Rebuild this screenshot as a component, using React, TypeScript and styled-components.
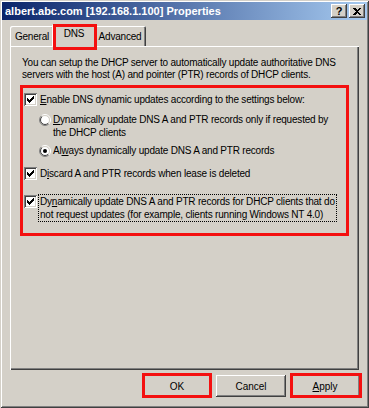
import React from "react";
import styled, { createGlobalStyle } from "styled-components";

const GlobalStyle = createGlobalStyle`
  html, body {
    margin: 0;
    padding: 0;
    background: #d4d0c8;
  }
  body {
    font-family: "Liberation Sans", Arial, sans-serif;
    font-size: 10px;
    letter-spacing: -0.2px;
    color: #000;
  }
`;

const RED = "#f41010";

// outer dialog frame
const Window = styled.div`
  width: 369px;
  height: 408px;
  box-sizing: border-box;
  background: #d4d0c8;
  padding: 2px 2px 3px;
  display: flex;
  flex-direction: column;
  box-shadow: inset 1px 1px 0 #d4d0c8, inset -1px -1px 0 #404040,
    inset 2px 2px 0 #fff, inset -2px -2px 0 #808080;
`;

const TitleBar = styled.div`
  height: 18px;
  display: flex;
  align-items: center;
  padding: 0 2px 0 3px;
  background: linear-gradient(to right, #0a246a, #a6caf0);
`;

const Title = styled.div`
  flex: 1;
  color: #fff;
  font-weight: bold;
  font-size: 11px;
  letter-spacing: 0;
  white-space: nowrap;
`;

const CaptionButton = styled.div<{ $gap?: number }>`
  width: 16px;
  height: 14px;
  margin-left: ${(p) => p.$gap ?? 0}px;
  background: #d4d0c8;
  display: flex;
  align-items: center;
  justify-content: center;
  font-weight: bold;
  font-size: 11px;
  line-height: 14px;
  box-shadow: inset -1px -1px 0 #404040, inset 1px 1px 0 #fff,
    inset -2px -2px 0 #808080, inset 2px 2px 0 #d4d0c8;
`;

const Body = styled.div`
  display: flex;
  flex-direction: column;
  padding: 4px 8px 0;
`;

const TabStrip = styled.div`
  height: 22px;
  display: flex;
  align-items: flex-end;
  position: relative;
  z-index: 1;
`;

const Tab = styled.div<{ $active?: boolean; $width: number; $marked?: boolean }>`
  position: relative;
  box-sizing: border-box;
  width: ${(p) => p.$width}px;
  height: ${(p) => (p.$active ? 23 : 20)}px;
  margin: ${(p) => (p.$active ? "0 -2px -1px" : "0")};
  padding-top: ${(p) => (p.$active ? 4 : 5)}px;
  text-align: center;
  background: #d4d0c8;
  z-index: ${(p) => (p.$active ? 2 : 0)};
  border-top-left-radius: 2px;
  border-top-right-radius: 2px;
  box-shadow: inset 1px 1px 0 #fff, inset -1px 0 0 #404040,
    inset -2px 0 0 #808080;

  &::after {
    content: "";
    display: ${(p) => (p.$marked ? "block" : "none")};
    position: absolute;
    top: 0;
    left: 1px;
    right: -1px;
    bottom: -3px;
    border: 3px solid ${RED};
  }
`;

const Panel = styled.div`
  height: 324px;
  box-sizing: border-box;
  padding: 11px 8px 0 11px;
  background: #d4d0c8;
  box-shadow: inset 1px 1px 0 #fff, inset -1px -1px 0 #404040,
    inset -2px -2px 0 #808080;
`;

const Description = styled.div`
  padding-left: 1px;
  line-height: 12px;
  white-space: nowrap;
`;

const Highlight = styled.div`
  width: 329px;
  box-sizing: border-box;
  margin: 4px 0 0 -1px;
  padding: 5px 0 12px 1px;
  border: 3px solid ${RED};
`;

const Row = styled.div<{ $top: number; $indent?: number }>`
  display: flex;
  align-items: flex-start;
  margin-top: ${(p) => p.$top}px;
  padding-left: ${(p) => p.$indent ?? 0}px;
  line-height: 13px;
  white-space: nowrap;
`;

const CheckBox = styled.span`
  flex: none;
  width: 13px;
  height: 13px;
  margin-right: 2px;
  display: flex;
  align-items: center;
  justify-content: center;
  background: #fff;
  box-shadow: inset 1px 1px 0 #808080, inset -1px -1px 0 #fff,
    inset 2px 2px 0 #404040, inset -2px -2px 0 #d4d0c8;
`;

const Radio = styled.svg`
  flex: none;
  width: 12px;
  height: 12px;
  margin: 1px 1px 0 0;
`;

const Label = styled.span<{ $focus?: boolean }>`
  padding: 0 1px;
  outline: ${(p) => (p.$focus ? "1px dotted #000" : "none")};
`;

const ButtonRow = styled.div`
  display: flex;
  justify-content: flex-end;
  gap: 4px;
  margin: 5px -1px 0 0;
`;

const Button = styled.button<{ $marked?: boolean; $wide?: number }>`
  position: relative;
  width: 70px;
  height: 22px;
  padding: 0;
  border: none;
  background: #d4d0c8;
  font-family: "Liberation Sans", Arial, sans-serif;
  font-size: 10px;
  color: #000;
  box-shadow: inset -1px -1px 0 #404040, inset 1px 1px 0 #fff,
    inset -2px -2px 0 #808080, inset 2px 2px 0 #d4d0c8;

  &::after {
    content: "";
    display: ${(p) => (p.$marked ? "block" : "none")};
    position: absolute;
    top: -2px;
    left: 0;
    right: ${(p) => -(p.$wide ?? 0)}px;
    bottom: -1px;
    border: 3px solid ${RED};
  }
`;

const Check = () => (
  <svg width="7" height="7" viewBox="0 0 7 7" shapeRendering="crispEdges">
    <path d="M0 2h1v3H0z M1 3h1v3H1z M2 4h1v3H2z M3 3h1v3H3z M4 2h1v3H4z M5 1h1v3H5z M6 0h1v3H6z" fill="#000" />
  </svg>
);

const RadioButton = ({ checked }: { checked?: boolean }) => (
  <Radio viewBox="0 0 12 12">
    <circle cx="6" cy="6" r="5.5" fill="none" stroke="#808080" strokeDasharray="17.3 17.3" strokeDashoffset="-4.3" />
    <circle cx="6" cy="6" r="5.5" fill="none" stroke="#fff" strokeDasharray="17.3 17.3" strokeDashoffset="13" />
    <circle cx="6" cy="6" r="4.5" fill="#fff" stroke="#404040" strokeDasharray="14.1 14.1" strokeDashoffset="-3.5" />
    <circle cx="6" cy="6" r="4.5" fill="none" stroke="#d4d0c8" strokeDasharray="14.1 14.1" strokeDashoffset="10.6" />
    {checked && <circle cx="6" cy="6" r="2" fill="#000" />}
  </Radio>
);

export default function App() {
  return (
    <>
      <GlobalStyle />
      <Window>
        <TitleBar>
          <Title>albert.abc.com [192.168.1.100] Properties</Title>
          <CaptionButton>?</CaptionButton>
          <CaptionButton $gap={2}>
            <svg width="8" height="7" viewBox="0 0 8 7" shapeRendering="crispEdges">
              <path d="M0 0h2l2 2 2-2h2L5 3.5 8 7H6L4 5 2 7H0l3-3.5z" fill="#000" />
            </svg>
          </CaptionButton>
        </TitleBar>
        <Body>
          <TabStrip>
            <Tab $width={44}>General</Tab>
            <Tab $width={44} $active $marked>DNS</Tab>
            <Tab $width={52}>Advanced</Tab>
          </TabStrip>
          <Panel>
            <Description>
              You can setup the DHCP server to automatically update authoritative DNS
              <br />
              servers with the host (A) and pointer (PTR) records of DHCP clients.
            </Description>
            <Highlight>
              <Row $top={0}>
                <CheckBox><Check /></CheckBox>
                <Label><u>E</u>nable DNS dynamic updates according to the settings below:</Label>
              </Row>
              <Row $top={7} $indent={15}>
                <RadioButton />
                <Label>
                  <u>D</u>ynamically update DNS A and PTR records only if requested by
                  <br />
                  the DHCP clients
                </Label>
              </Row>
              <Row $top={5} $indent={15}>
                <RadioButton checked />
                <Label>Al<u>w</u>ays dynamically update DNS A and PTR records</Label>
              </Row>
              <Row $top={10}>
                <CheckBox><Check /></CheckBox>
                <Label>D<u>i</u>scard A and PTR records when lease is deleted</Label>
              </Row>
              <Row $top={15}>
                <CheckBox><Check /></CheckBox>
                <Label $focus>
                  Dy<u>n</u>amically update DNS A and PTR records for DHCP clients that do
                  <br />
                  not request updates (for example, clients running Windows NT 4.0)
                </Label>
              </Row>
            </Highlight>
          </Panel>
          <ButtonRow>
            <Button $marked>OK</Button>
            <Button>Cancel</Button>
            <Button $marked $wide={2}><u>A</u>pply</Button>
          </ButtonRow>
        </Body>
      </Window>
    </>
  );
}
